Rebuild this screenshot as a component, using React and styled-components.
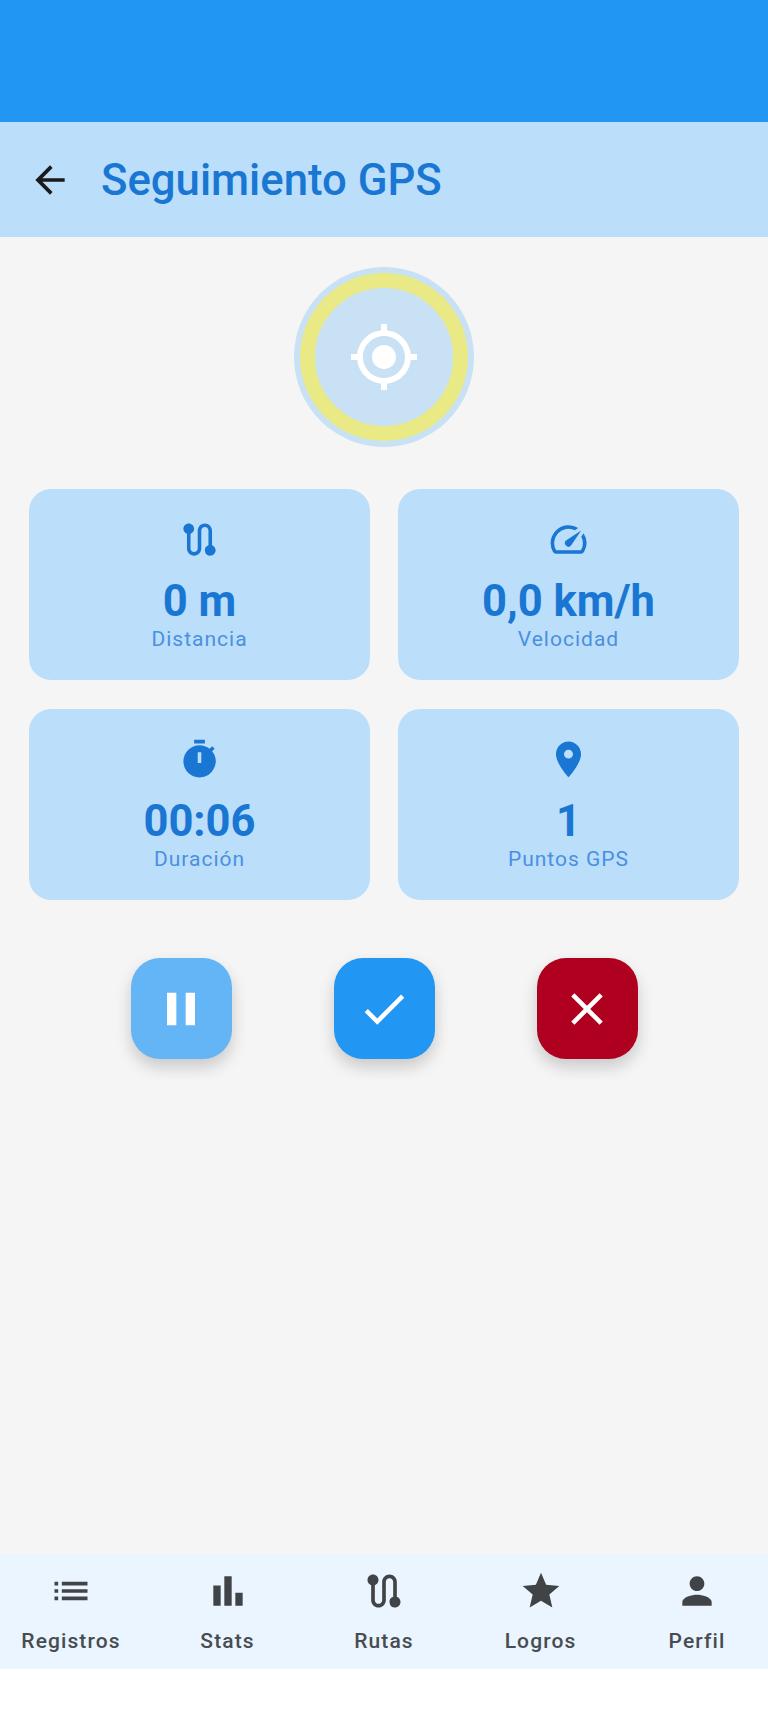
import React from 'react';
import styled, { createGlobalStyle } from 'styled-components';
import {
  MdArrowBack, MdGpsFixed, MdRoute, MdSpeed, MdTimer, MdLocationOn, MdPause, MdCheck, MdClose,
  MdList, MdBarChart, MdStar, MdPerson,
} from 'react-icons/md';

const Global = createGlobalStyle`
  html, body { margin: 0; padding: 0; background: #fff; }
  body { font-family: Roboto, "Noto Sans", sans-serif; }
`;

const Screen = styled.div`
  width: 768px; height: 1713px; display: flex; flex-direction: column; overflow: hidden; background: #fff;
`;
const StatusBar = styled.div`height: 122px; flex: none; background: #2196f3;`;
const AppBar = styled.header`
  height: 115px; flex: none; background: #bbdefb; display: flex; align-items: center;
  padding-left: 28px; gap: 29px; color: #1a1a1a;
`;
const Title = styled.h1`
  margin: 2px 0 0; font-size: 43.7px; font-weight: 500; color: #1976d2; line-height: 1;
`;
const Content = styled.main`
  flex: 1; background: #f5f5f5; padding: 30px 29px 0; display: flex; flex-direction: column; align-items: center;
`;
const Beacon = styled.div`
  width: 180px; height: 180px; border-radius: 50%; background: #c9e1f5; display: flex;
  align-items: center; justify-content: center; color: #fff; flex: none;
`;
const Ring = styled.div`
  width: 168px; height: 168px; box-sizing: border-box; border-radius: 50%; border: 15px solid #e9e986;
  display: flex; align-items: center; justify-content: center;
`;
const Stats = styled.section`
  margin-top: 42px; width: 100%; display: grid; grid-template-columns: 341px 341px; gap: 29px 28px;
`;
const Card = styled.div`
  height: 191px; background: #bbdefb; border-radius: 22px; display: flex; flex-direction: column;
  align-items: center; padding-top: 29px; box-sizing: border-box; color: #1976d2;
`;
const Value = styled.div`
  margin-top: 15px; font-size: 43.5px; font-weight: 700; line-height: 52px; color: #1976d2;
`;
const Label = styled.div`
  margin-top: -2px; font-size: 21px; line-height: 26px; letter-spacing: 1px; color: #4a90df;
`;
const Actions = styled.section`
  margin-top: 58px; display: flex; gap: 102px;
`;
const ActionButton = styled.button`
  width: 101px; height: 101px; border: 0; padding: 0; border-radius: 29px; background: ${p => p.$bg};
  color: #fff; display: flex; align-items: center; justify-content: center;
  box-shadow: 0 8px 16px rgba(0, 0, 0, 0.18);
`;
const Nav = styled.nav`
  height: 115px; flex: none; background: #eaf5ff; display: flex; justify-content: space-between;
  padding: 0 1px; color: #404447;
`;
const NavItem = styled.div`
  width: 140px; display: flex; flex-direction: column; align-items: center; padding-top: 15px; box-sizing: border-box;
`;
const NavLabel = styled.span`
  margin-top: 15px; font-size: 21px; font-weight: 500; line-height: 26px; letter-spacing: 1.1px; color: #484c50;
`;
const BottomInset = styled.div`height: 44px; flex: none; background: #fff;`;

const stats = [
  { Icon: MdRoute, value: '0 m', label: 'Distancia' },
  { Icon: MdSpeed, value: '0,0 km/h', label: 'Velocidad' },
  { Icon: MdTimer, value: '00:06', label: 'Duración' },
  { Icon: MdLocationOn, value: '1', label: 'Puntos GPS' },
];
const actions = [
  { Icon: MdPause, bg: '#64b5f6', size: 56 },
  { Icon: MdCheck, bg: '#2196f3', size: 54 },
  { Icon: MdClose, bg: '#b00020', size: 54 },
];
const tabs = [
  { Icon: MdList, label: 'Registros' },
  { Icon: MdBarChart, label: 'Stats' },
  { Icon: MdRoute, label: 'Rutas' },
  { Icon: MdStar, label: 'Logros' },
  { Icon: MdPerson, label: 'Perfil' },
];

export default function App() {
  return (
    <Screen>
      <Global />
      <StatusBar />
      <AppBar>
        <MdArrowBack size={44} />
        <Title>Seguimiento GPS</Title>
      </AppBar>
      <Content>
        <Beacon>
          <Ring><MdGpsFixed size={72} /></Ring>
        </Beacon>
        <Stats>
          {stats.map(({ Icon, value, label }) => (
            <Card key={label}>
              <Icon size={43} />
              <Value>{value}</Value>
              <Label>{label}</Label>
            </Card>
          ))}
        </Stats>
        <Actions>
          {actions.map(({ Icon, bg, size }, i) => (
            <ActionButton key={i} $bg={bg}><Icon size={size} /></ActionButton>
          ))}
        </Actions>
      </Content>
      <Nav>
        {tabs.map(({ Icon, label }) => (
          <NavItem key={label}>
            <Icon size={44} />
            <NavLabel>{label}</NavLabel>
          </NavItem>
        ))}
      </Nav>
      <BottomInset />
    </Screen>
  );
}
